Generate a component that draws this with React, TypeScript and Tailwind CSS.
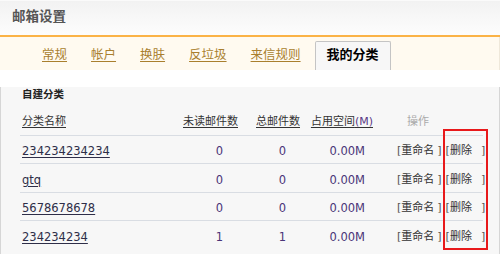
import React from "react";

const rows = [
  { name: "234234234234", unread: "0", total: "0", size: "0.00M", h: "h-[28px]" },
  { name: "gtq", unread: "0", total: "0", size: "0.00M", h: "h-[29px]" },
  { name: "5678678678", unread: "0", total: "0", size: "0.00M", h: "h-[28px]" },
  { name: "234234234", unread: "1", total: "1", size: "0.00M", h: "h-[29px]" },
];

const tabs = ["常规", "帐户", "换肤", "反垃圾", "来信规则"];

const cols = "grid grid-cols-[163px_55px_62px_73px_110px]";

export default function App() {
  return (
    <div
      className="relative w-[500px] h-[254px] bg-white text-[#333] overflow-hidden"
      style={{ fontFamily: '"DejaVu Sans", "Noto Sans CJK SC", sans-serif' }}
    >
      {/* page title */}
      <div className="h-[35px] flex items-center pl-[12px] bg-gradient-to-b from-[#f2f2f2] to-[#fdfdfd] border-t border-[#fafafa]">
        <span className="text-[13.5px] font-bold text-[#555] leading-none pb-[3px]">邮箱设置</span>
      </div>
      <div className="h-[2px] bg-[#fbb347]" />

      {/* tabs */}
      <div className="h-[33px] bg-[#fffaf0] border-r border-[#efe8da] flex items-end pl-[42px] gap-[24px] text-[12.5px]">
        {tabs.map((t) => (
          <a key={t} className="pb-[7px] leading-[16px] text-[#a97f2e] underline underline-offset-2 cursor-pointer">
            {t}
          </a>
        ))}
        <div className="-ml-[10px] h-[29px] px-[11px] pt-[5px] bg-[#f7f7f7] border border-b-0 border-[#c4c4c4] rounded-t-[2px] text-[13px] font-bold text-black leading-[16px]">
          我的分类
        </div>
      </div>

      {/* content */}
      <div className="h-[180px] bg-[#f7f7f7] border-l border-r border-b border-[#d6d6d6] rounded-bl-[5px] pl-[19px] pr-[16px]">
        <div className="mt-[17px] h-[14px] leading-[14px] pl-[2px] text-[10.5px] font-bold text-[#222]">自建分类</div>

        <div className={`${cols} h-[35px] items-end pb-[6px] border-b border-[#d9dde3] text-[11px] leading-[14px]`}>
          <span className="pl-[2px]"><u className="underline-offset-2">分类名称</u></span>
          <span className="text-right"><u className="underline-offset-2">未读邮件数</u></span>
          <span className="text-right"><u className="underline-offset-2">总邮件数</u></span>
          <span className="text-right"><u className="underline-offset-2">占用空间<span className="text-[#5a3a86]">(M)</span></u></span>
          <span className="pl-[34px] text-[#aaa]">操作</span>
        </div>

        {rows.map((r, i) => (
          <div
            key={i}
            className={`${cols} ${r.h} items-center pt-[3px] text-[11px] leading-[14px] ${i < rows.length - 1 ? "border-b border-[#d9dde3]" : ""}`}
          >
            <span className="pl-[2px] text-[11.5px]">
              <a className="underline underline-offset-2 text-[#2e2e48] cursor-pointer">{r.name}</a>
            </span>
            <span className="text-right pr-[15px] text-[11.5px] text-[#4a3478]">{r.unread}</span>
            <span className="text-right pr-[14px] text-[11.5px] text-[#4a3478]">{r.total}</span>
            <span className="text-right pr-[8px] text-[11.5px] text-[#4a3478]">{r.size}</span>
            <span className="pl-[24px] whitespace-nowrap text-[#333]">
              <span className="text-[#555]">[</span>重命名<span className="ml-[3px] text-[#555]">]</span>
              <span className="ml-[4px] text-[#555]">[</span>删除<span className="ml-[9px] text-[#555]">]</span>
            </span>
          </div>
        ))}
      </div>

      {/* red annotation box */}
      <div className="absolute left-[443px] top-[129px] w-[45px] h-[121px] border-2 border-[#e8191b]" />
    </div>
  );
}
